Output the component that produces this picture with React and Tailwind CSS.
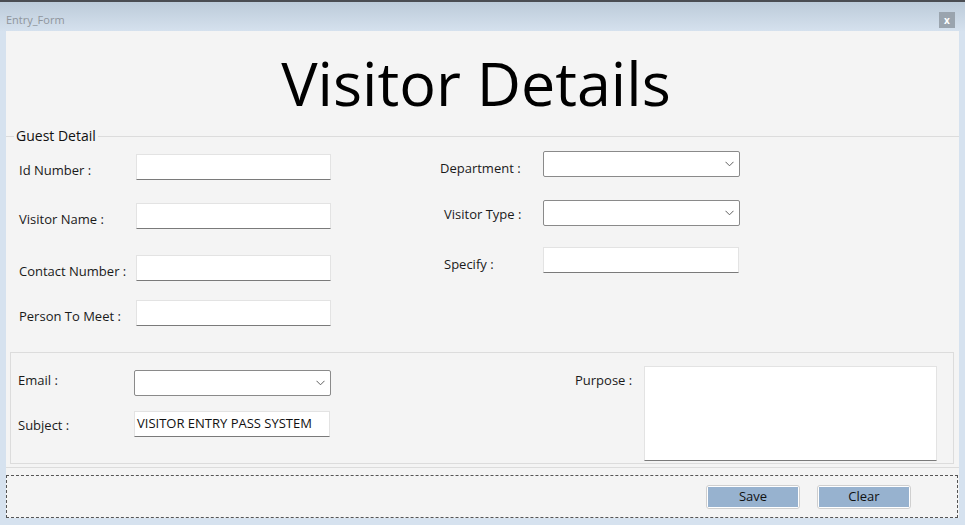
import React from 'react';

const font = "font-['Open_Sans',sans-serif]";

function TextBox({ value = '', className = '' }) {
  return (
    <div
      className={`h-[26px] bg-white border border-[#e3e3e3] border-b-[#7a7a7a] flex items-center px-[2px] text-[13px] text-[#111] ${className}`}
    >
      {value}
    </div>
  );
}

function ComboBox({ className = '' }) {
  return (
    <div
      className={`h-[26px] bg-white border border-[#8a8a8a] rounded-[2px] flex items-center justify-end pr-[5px] ${className}`}
    >
      <svg width="9" height="6" viewBox="0 0 9 6" fill="none">
        <path d="M0.5 0.8 L4.5 4.8 L8.5 0.8" stroke="#606060" strokeWidth="1" />
      </svg>
    </div>
  );
}

// label sits a few px off the box centre in the original form, so each row gets its own dy
function Field({ label, labelW, labelPl = 0, top, dy = 6, children }) {
  return (
    <div className="flex items-start" style={{ marginTop: top }}>
      <div
        className="text-[13px] leading-[20px] text-[#1a1a1a] shrink-0"
        style={{ width: labelW, paddingLeft: labelPl, marginTop: dy }}
      >
        {label}
      </div>
      {children}
    </div>
  );
}

function Button({ children }) {
  return (
    <div className="w-[94px] h-[24px] rounded-[3px] border border-[#cfcfcf] bg-white p-[1px]">
      <div className="h-full bg-[#97b2cf] flex items-center justify-center text-[13px] text-[#111]">
        {children}
      </div>
    </div>
  );
}

export default function App() {
  return (
    <div className={`w-[965px] h-[525px] bg-[#d6e2ef] border-t-2 border-[#4a4d52] flex flex-col ${font}`}>
      {/* title bar */}
      <div className="h-[29px] shrink-0 bg-gradient-to-b from-[#bccbd9] to-[#d5e1ee] flex items-center justify-between pl-[6px] pr-[10px] pt-[6px]">
        <span className="text-[11px] text-[#8f959c] leading-none">Entry_Form</span>
        <div className="w-[16px] h-[16px] bg-[#9aa4ae] flex items-center justify-center text-white text-[10px] font-bold leading-none">
          x
        </div>
      </div>

      {/* client area */}
      <div className="mx-[6px] h-[487px] bg-[#f4f4f4] flex flex-col">
        <div className="h-[105px] shrink-0 flex items-center justify-center pb-[2px] pr-[13px]">
          <h1 className="text-[61px] text-black leading-none">Visitor Details</h1>
        </div>

        {/* Guest Detail group */}
        <div className="relative h-[332px] shrink-0 border-t border-b border-[#dcdcdc] flex flex-col">
          <span className="absolute -top-[10px] left-[8px] px-[2px] bg-[#f4f4f4] text-[14px] text-[#111] leading-[18px]">
            Guest Detail
          </span>

          <div className="flex h-[215px] shrink-0">
            <div className="w-[420px] pl-[13px]">
              <Field label="Id Number :" labelW={117} top={17}>
                <TextBox className="w-[195px]" />
              </Field>
              <Field label="Visitor Name :" labelW={117} top={23}>
                <TextBox className="w-[195px]" />
              </Field>
              <Field label="Contact Number :" labelW={117} top={26}>
                <TextBox className="w-[195px]" />
              </Field>
              <Field label="Person To Meet :" labelW={117} top={19}>
                <TextBox className="w-[195px]" />
              </Field>
            </div>
            <div className="pl-[14px]">
              <Field label="Department :" labelW={103} top={14} dy={7}>
                <ComboBox className="w-[197px]" />
              </Field>
              <Field label="Visitor Type :" labelW={103} labelPl={4} top={22} dy={4}>
                <ComboBox className="w-[197px]" />
              </Field>
              <Field label="Specify :" labelW={103} labelPl={4} top={21} dy={7}>
                <TextBox className="w-[196px]" />
              </Field>
            </div>
          </div>

          {/* email / purpose panel */}
          <div className="ml-[4px] mr-[5px] h-[112px] border border-[#dcdcdc] flex">
            <div className="w-[540px] pl-[7px]">
              <Field label="Email :" labelW={116} top={17} dy={0}>
                <ComboBox className="w-[197px]" />
              </Field>
              <Field label="Subject :" labelW={116} top={15} dy={4}>
                <TextBox value="VISITOR ENTRY PASS SYSTEM" className="w-[196px]" />
              </Field>
            </div>
            <div className="flex pt-[13px]">
              <div className="w-[93px] pl-[24px] text-[13px] leading-[20px] text-[#1a1a1a] pt-[4px]">Purpose :</div>
              <div className="w-[293px] h-[95px] bg-white border border-[#e3e3e3] border-b-[#7a7a7a]" />
            </div>
          </div>
        </div>

        {/* button strip */}
        <div className="mt-[7px] mr-[1px] h-[44px] border border-dashed border-[#555] flex items-center justify-end gap-[17px] pr-[46px]">
          <Button>Save</Button>
          <Button>Clear</Button>
        </div>
      </div>
    </div>
  );
}
